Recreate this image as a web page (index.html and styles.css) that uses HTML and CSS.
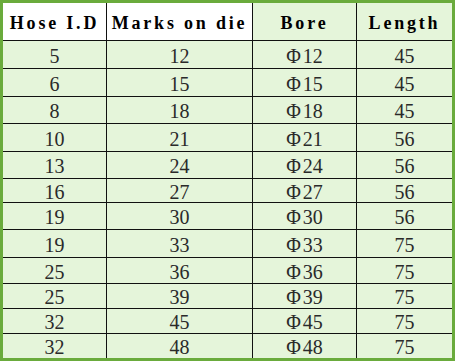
FILE: index.html
```html
<!DOCTYPE html>
<html lang="en">
<head>
    <meta charset="UTF-8">
    <title>Hose crimp die sizes</title>
    <link rel="stylesheet" href="styles.css">
</head>
<body>
    <table class="sizes">
        <colgroup>
            <col class="c-id">
            <col class="c-marks">
            <col class="c-bore">
            <col class="c-len">
        </colgroup>
        <thead>
            <tr class="head">
                <th class="white">Hose I.D</th>
                <th class="white">Marks on die</th>
                <th>Bore</th>
                <th>Length</th>
            </tr>
        </thead>
        <tbody>
            <tr class="h28"><td>5</td><td>12</td><td><span class="phi">&Phi;</span>12</td><td>45</td></tr>
            <tr class="h28"><td>6</td><td>15</td><td><span class="phi">&Phi;</span>15</td><td>45</td></tr>
            <tr class="h27"><td>8</td><td>18</td><td><span class="phi">&Phi;</span>18</td><td>45</td></tr>
            <tr class="h28"><td>10</td><td>21</td><td><span class="phi">&Phi;</span>21</td><td>56</td></tr>
            <tr class="h27"><td>13</td><td>24</td><td><span class="phi">&Phi;</span>24</td><td>56</td></tr>
            <tr class="h24"><td>16</td><td>27</td><td><span class="phi">&Phi;</span>27</td><td>56</td></tr>
            <tr class="h27"><td>19</td><td>30</td><td><span class="phi">&Phi;</span>30</td><td>56</td></tr>
            <tr class="h28"><td>19</td><td>33</td><td><span class="phi">&Phi;</span>33</td><td>75</td></tr>
            <tr class="h26"><td>25</td><td>36</td><td><span class="phi">&Phi;</span>36</td><td>75</td></tr>
            <tr class="h25"><td>25</td><td>39</td><td><span class="phi">&Phi;</span>39</td><td>75</td></tr>
            <tr class="h25"><td>32</td><td>45</td><td><span class="phi">&Phi;</span>45</td><td>75</td></tr>
            <tr class="h24 last"><td>32</td><td>48</td><td><span class="phi">&Phi;</span>48</td><td>75</td></tr>
        </tbody>
    </table>
</body>
</html>
```

FILE: styles.css
```css
body {
    margin: 0;
    padding: 0;
    background-color: #fff;
}

.sizes {
    width: 455px;
    table-layout: fixed;
    border-collapse: separate;
    border-spacing: 0;
    border: 3px solid #6aab3c;
    background-color: #e5f5da;
    font-family: "Liberation Serif", serif;
    color: #2a2a2a;
}

.c-id { width: 104px; }
.c-marks { width: 146px; }
.c-bore { width: 104px; }
.c-len { width: 95px; }

th,
td {
    padding: 0;
    text-align: center;
    border-right: 1px solid #111;
    border-bottom: 1px solid #111;
    box-sizing: border-box;
}

th:last-child,
td:last-child {
    border-right: none;
}

.last td {
    border-bottom: none;
}

th {
    height: 38px;
    padding-top: 3px;
    font-family: "Liberation Serif", serif;
    font-size: 18px;
    font-weight: bold;
    letter-spacing: 2.8px;
    color: #000;
}

th.white {
    background-color: #fff;
}

td {
    font-size: 20px;
    line-height: 18px;
    padding-top: 2px;
}

.phi {
    margin-right: 2px;
}

.h28 td { height: 28px; }
.h27 td { height: 27px; }
.h26 td { height: 26px; }
.h25 td { height: 25px; }
.h24 td { height: 24px; }
.last td { height: 24px; }
```
